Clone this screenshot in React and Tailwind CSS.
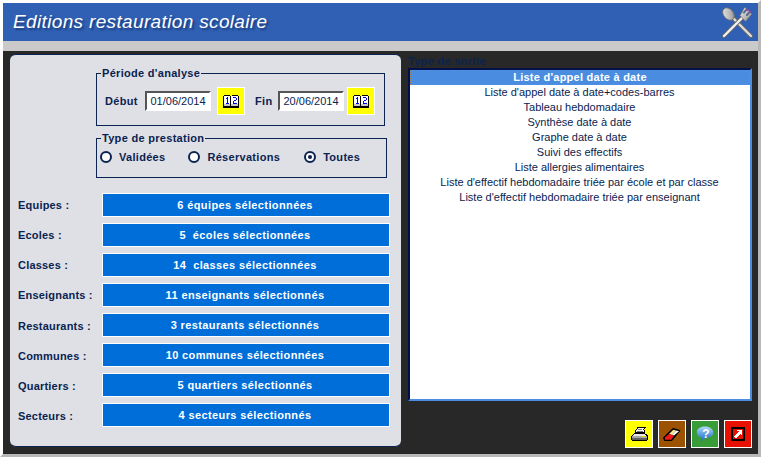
import React from 'react';

const rows = [
  ['Equipes :', '6 équipes sélectionnées'],
  ['Ecoles :', '5  écoles sélectionnées'],
  ['Classes :', '14  classes sélectionnées'],
  ['Enseignants :', '11 enseignants sélectionnés'],
  ['Restaurants :', '3 restaurants sélectionnés'],
  ['Communes :', '10 communes sélectionnées'],
  ['Quartiers :', '5 quartiers sélectionnés'],
  ['Secteurs :', '4 secteurs sélectionnés'],
];

const reports = [
  "Liste d'appel date à date",
  "Liste d'appel date à date+codes-barres",
  'Tableau hebdomadaire',
  'Synthèse date à date',
  'Graphe date à date',
  'Suivi des effectifs',
  'Liste allergies alimentaires',
  "Liste d'effectif hebdomadaire triée par école et par classe",
  "Liste d'effectif hebdomadaire triée par enseignant",
];

const CalendarIcon = () => (
  <svg width="16" height="13" viewBox="0 0 16 13" shapeRendering="crispEdges">
    <path d="M1 0h6v1H1zM9 0h6v1H9zM0 1h1v10H0zM15 1h1v10h-1zM7 1h1v11H7zM0 11h16v2H0z" fill="#000" />
    <path d="M1 1h6v8H1zM8 1h7v8H8z" fill="#fff" />
    <path d="M1 9h6v2H1zM8 9h7v2H8z" fill="#c8c8c8" />
    <path d="M4 2h1v6H4zM3 3h1v1H3zM3 8h3v1H3z" fill="#0000e0" />
    <path d="M10 2h3v1h-3zM13 3h1v2h-1zM11 5h2v1h-2zM10 6h1v2h-1zM10 8h4v1h-4z" fill="#0000e0" />
  </svg>
);

const PrinterIcon = () => (
  <svg width="17" height="15" viewBox="0 0 17 15" shapeRendering="crispEdges">
    <path d="M6 0h9v1h-1v1h-1v1h1v3H4V3h1V2h1V1h0z" fill="#000" />
    <path d="M7 1h6v1h-1v1h1v2H5V3h1V2h1z" fill="#fff" />
    <path d="M7 2h4v1H7zM6 4h6v1H6z" fill="#777" />
    <path d="M3 6h11v1h2v1h1v5h-1v1H1v-1H0V9h1V8h1V7h1z" fill="#000" />
    <path d="M3 7h11v1h1v1H2V8h1z" fill="#e8e8e8" />
    <path d="M1 9h15v2H1z" fill="#a8a8a8" />
    <path d="M11 9h3v1h-3z" fill="#e8d800" />
    <path d="M1 11h15v2H1z" fill="#606060" />
  </svg>
);

const EraserIcon = () => (
  <svg width="18" height="13" viewBox="0 0 18 13">
    <path d="M.5 9.500 10 .5l7 2-8 10H1.500z" fill="#000" stroke="#000" />
    <path d="M6 6 10.300 1.800 13 2.500 9 7z" fill="#f8e890" />
    <path d="M13 2.500 16 3.200 11 7.500 9 7z" fill="#fff" />
    <path d="M1.800 9.500 6 6l5 1.500-2.800 4.300H2z" fill="#f01818" />
  </svg>
);

const HelpIcon = () => (
  <svg width="18" height="16" viewBox="0 0 18 16">
    <defs>
      <linearGradient id="bubble" x1="0" y1="0" x2="0" y2="1">
        <stop offset="0" stopColor="#b4d8f6" />
        <stop offset="0.5" stopColor="#5c9fe0" />
        <stop offset="1" stopColor="#2a66b4" />
      </linearGradient>
    </defs>
    <path d="M9 .5C4.200.5.800 3 .800 6.500c0 2.600 1.900 4.600 4.700 5.300L4.500 15.500l4.800-3.300c4.600-.1 7.900-2.400 7.900-5.700C17.200 3 13.800.5 9 .5z" fill="url(#bubble)" />
    <text x="10" y="11.500" textAnchor="middle" fontSize="12" fontWeight="700" fontFamily="Liberation Sans, sans-serif" fill="#fff">?</text>
  </svg>
);

const ExitIcon = () => (
  <svg width="14" height="14" viewBox="0 0 14 14" shapeRendering="crispEdges">
    <path d="M0 0h14v14H0z" fill="#000" />
    <path d="M2 2h10v10H2z" fill="#e81000" />
    <path d="M6 3h5v5h-1V7H9v1H8v1H7v1H6v1H4v-1H3V9h1V8h1V7h1V6h1V5h1V4H6z" fill="#fff" />
  </svg>
);

const CutleryIcon = () => (
  <svg width="33" height="33" viewBox="0 0 33 33">
    <defs>
      <linearGradient id="metal" x1="0" y1="0" x2="1" y2="1">
        <stop offset="0" stopColor="#e8e8e8" />
        <stop offset="0.55" stopColor="#bcbcbc" />
        <stop offset="1" stopColor="#7c7c7c" />
      </linearGradient>
    </defs>
    <path d="M30 30 12 12" stroke="#666" strokeWidth="4" strokeLinecap="round" />
    <path d="M30 30 12 12" stroke="#dcdcdc" strokeWidth="2.400" strokeLinecap="round" />
    <ellipse cx="7.500" cy="8" rx="5" ry="7" transform="rotate(-40 7.500 8)" fill="url(#metal)" stroke="#666" strokeWidth="0.800" />
    <path d="M3 30 21 12" stroke="#666" strokeWidth="4" strokeLinecap="round" />
    <path d="M3 30 21 12" stroke="#f2f2f2" strokeWidth="2.400" strokeLinecap="round" />
    <path d="M19 9.500 24.500 15.500 31 8 29 6.500 26 10 25 9 28.500 5 26.500 3.500 23 7.500 22 6.500 25.500 2.500 23.500 1.500z" fill="url(#metal)" stroke="#666" strokeWidth="0.600" />
    <path d="M26 2.500l1.800 1.200-1.200 1.500-1.600-1.100zM29 4.800l1.200 1-1.200 1.400-1.200-1z" fill="#b030b0" />
  </svg>
);

const IconButton = ({ bg, children }) => (
  <button className={`flex h-[28px] w-[28px] items-center justify-center border border-white ${bg}`}>
    {children}
  </button>
);

const Radio = ({ label, checked, className }) => (
  <label className={`flex items-center ${className}`}>
    <span className="flex h-[12px] w-[12px] items-center justify-center rounded-full border-2 border-[#0a2350] bg-white">
      {checked && <span className="h-[4px] w-[4px] rounded-full bg-[#0a2350]" />}
    </span>
    <span className="ml-[7px]">{label}</span>
  </label>
);

export default function App() {
  return (
    <div className="h-[457px] w-[761px] overflow-hidden border-[3px] border-t-white border-l-white border-r-[#b8b8b8] border-b-[#b8b8b8] bg-[#282828] font-['Liberation_Sans',Arial,sans-serif] text-[11px]">
      <header className="flex h-[38px] items-center justify-between bg-[#3060b4] pl-[10px] pr-[4px]">
        <h1 className="text-[19px] italic tracking-[0.35px] text-white [text-shadow:2px_2px_2px_#1a3c7c]">
          Editions restauration scolaire
        </h1>
        <CutleryIcon />
      </header>
      <div className="h-[10px] bg-[#cacaca]" />

      <main className="flex pt-[3px] pl-[7px] pr-[6px]">
        <section className="h-[393px] w-[391px] rounded-[6px] border-y border-[#0a2350] bg-[#dfe0e5] pt-[13px] font-bold tracking-[0.3px] text-[#0a2350]">
          <fieldset className="ml-[86px] h-[58px] w-[289px] border border-[#0a2350] pl-[8px]">
            <legend className="ml-[-4px] px-[1px] leading-[11px]">Période d'analyse</legend>
            <div className="mt-[8px] flex items-center">
              <span className="w-[40px]">Début</span>
              <input readOnly value="01/06/2014" className="h-[20px] w-[66px] border-2 border-t-[#555] border-l-[#555] border-r-white border-b-white bg-white text-center text-[11px] font-normal tracking-normal text-[#0a2350] outline-none" />
              <button className="ml-[6px] flex h-[28px] w-[28px] items-center justify-center border border-white bg-[#ffff00]"><CalendarIcon /></button>
              <span className="ml-[10px] w-[23px]">Fin</span>
              <input readOnly value="20/06/2014" className="h-[20px] w-[66px] border-2 border-t-[#555] border-l-[#555] border-r-white border-b-white bg-white text-center text-[11px] font-normal tracking-normal text-[#0a2350] outline-none" />
              <button className="ml-[3px] flex h-[28px] w-[28px] items-center justify-center border border-white bg-[#ffff00]"><CalendarIcon /></button>
            </div>
          </fieldset>

          <fieldset className="mt-[7px] ml-[86px] h-[45px] w-[291px] border border-[#0a2350]">
            <legend className="ml-[4px] px-[1px] leading-[11px]">Type de prestation</legend>
            <div className="mt-[5px] flex items-center">
              <Radio label="Validées" className="ml-[3px]" />
              <Radio label="Réservations" className="ml-[23px]" />
              <Radio label="Toutes" checked className="ml-[24px]" />
            </div>
          </fieldset>

          <div className="mt-[15px] flex flex-col gap-[6px]">
            {rows.map(([label, value], i) => (
              <div key={label} className="flex h-[24px] items-center">
                <span className={i > 3 ? 'w-[92px] pt-[2px] pl-[8px] tracking-[0.2px]' : 'w-[92px] pl-[8px] tracking-[0.2px]'}>{label}</span>
                <button className="h-[24px] w-[288px] border border-white bg-[#006ed9] pr-[2px] font-bold tracking-[0.38px] whitespace-pre text-white">
                  {value}
                </button>
              </div>
            ))}
          </div>
        </section>

        <section className="ml-[7px] flex flex-1 flex-col">
          <div className="h-[14px] leading-[14px] font-bold tracking-[0.3px] text-[#0a2350]">Type de sortie</div>
          <ul className="h-[333px] w-[344px] border-2 border-t-[#00104a] border-l-[#00104a] border-r-[#4a8de0] border-b-[#4a8de0] bg-white text-center text-[#0a2350]">
            {reports.map((item, i) => (
              <li key={item} className={i === 0 ? 'h-[15px] border border-dotted border-[#b08040] bg-[#4a8de0] leading-[13px] font-bold tracking-[0.25px] text-white' : 'h-[15px] pr-[1px] leading-[15px]'}>
                {item}
              </li>
            ))}
          </ul>
          <div className="mt-[19px] flex justify-end gap-[5px]">
            <IconButton bg="bg-[#ffff00]"><PrinterIcon /></IconButton>
            <IconButton bg="bg-[#9c5200]"><EraserIcon /></IconButton>
            <IconButton bg="bg-[#389c38]"><HelpIcon /></IconButton>
            <IconButton bg="bg-[#e81000]"><ExitIcon /></IconButton>
          </div>
        </section>
      </main>
    </div>
  );
}
